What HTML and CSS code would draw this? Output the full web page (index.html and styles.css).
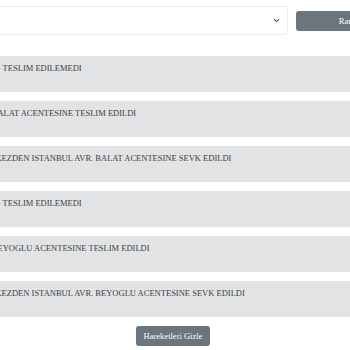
FILE: index.html
```html
<!DOCTYPE html>
<html lang="tr">
<head>
<meta charset="utf-8">
<title>Kargo Hareketleri</title>
<link rel="stylesheet" href="styles.css">
</head>
<body>
<div class="page">
  <div class="form-row">
    <div class="select">
      <span class="select-value"></span>
      <svg class="chev" width="7" height="5" viewBox="0 0 7 5"><path d="M1 1.2 L3.5 3.6 L6 1.2" fill="none" stroke="#555" stroke-width="1.1"/></svg>
    </div>
    <button class="btn btn-secondary btn-top">Randevu Al</button>
  </div>
  <div class="moves">
    <div class="move">ALICI EVDE YOK - TESLIM EDILEMEDI</div>
    <div class="move">ISTANBUL AVR. BALAT ACENTESINE TESLIM EDILDI</div>
    <div class="move">HADIMKOY MERKEZDEN ISTANBUL AVR. BALAT ACENTESINE SEVK EDILDI</div>
    <div class="move">ALICI EVDE YOK - TESLIM EDILEMEDI</div>
    <div class="move">ISTANBUL AVR. BEYOGLU ACENTESINE TESLIM EDILDI</div>
    <div class="move">HADIMKOY MERKEZDEN ISTANBUL AVR. BEYOGLU ACENTESINE SEVK EDILDI</div>
  </div>
  <div class="actions">
    <button class="btn btn-secondary btn-hide">Hareketleri Gizle</button>
  </div>
</div>
</body>
</html>
```
FILE: styles.css
```css
html, body {
  margin: 0;
  padding: 0;
  background: #ffffff;
  overflow: hidden;
}
body {
  font-family: "Liberation Serif", "Times New Roman", serif;
  font-size: 8.5px;
  color: #3a3e42;
}
.page {
  width: 506px;
  margin-left: -80px;
}
.form-row {
  display: flex;
  align-items: center;
  gap: 8px;
  margin-top: 6px;
}
.select {
  width: 368px;
  height: 29px;
  box-sizing: border-box;
  border: 1px solid #ececec;
  border-radius: 2px;
  background: #fff;
  display: flex;
  align-items: center;
  justify-content: flex-end;
  padding-right: 7px;
}
.chev {
  display: block;
}
.btn {
  font-family: "Liberation Serif", "Times New Roman", serif;
  font-size: 8.5px;
  border: none;
  border-radius: 3px;
  color: #fff;
  cursor: pointer;
}
.btn-secondary {
  background: #6c757d;
}
.btn-top {
  height: 20px;
  width: 126px;
  padding: 0;
}
.moves {
  margin-top: 21px;
  display: flex;
  flex-direction: column;
  gap: 9px;
}
.move {
  height: 36px;
  box-sizing: border-box;
  background: #e2e3e5;
  padding: 6px 8px;
  line-height: 12px;
  white-space: nowrap;
}
.actions {
  display: flex;
  justify-content: center;
  margin-top: 9px;
}
.btn-hide {
  width: 74px;
  height: 20px;
  padding: 0;
}
```
